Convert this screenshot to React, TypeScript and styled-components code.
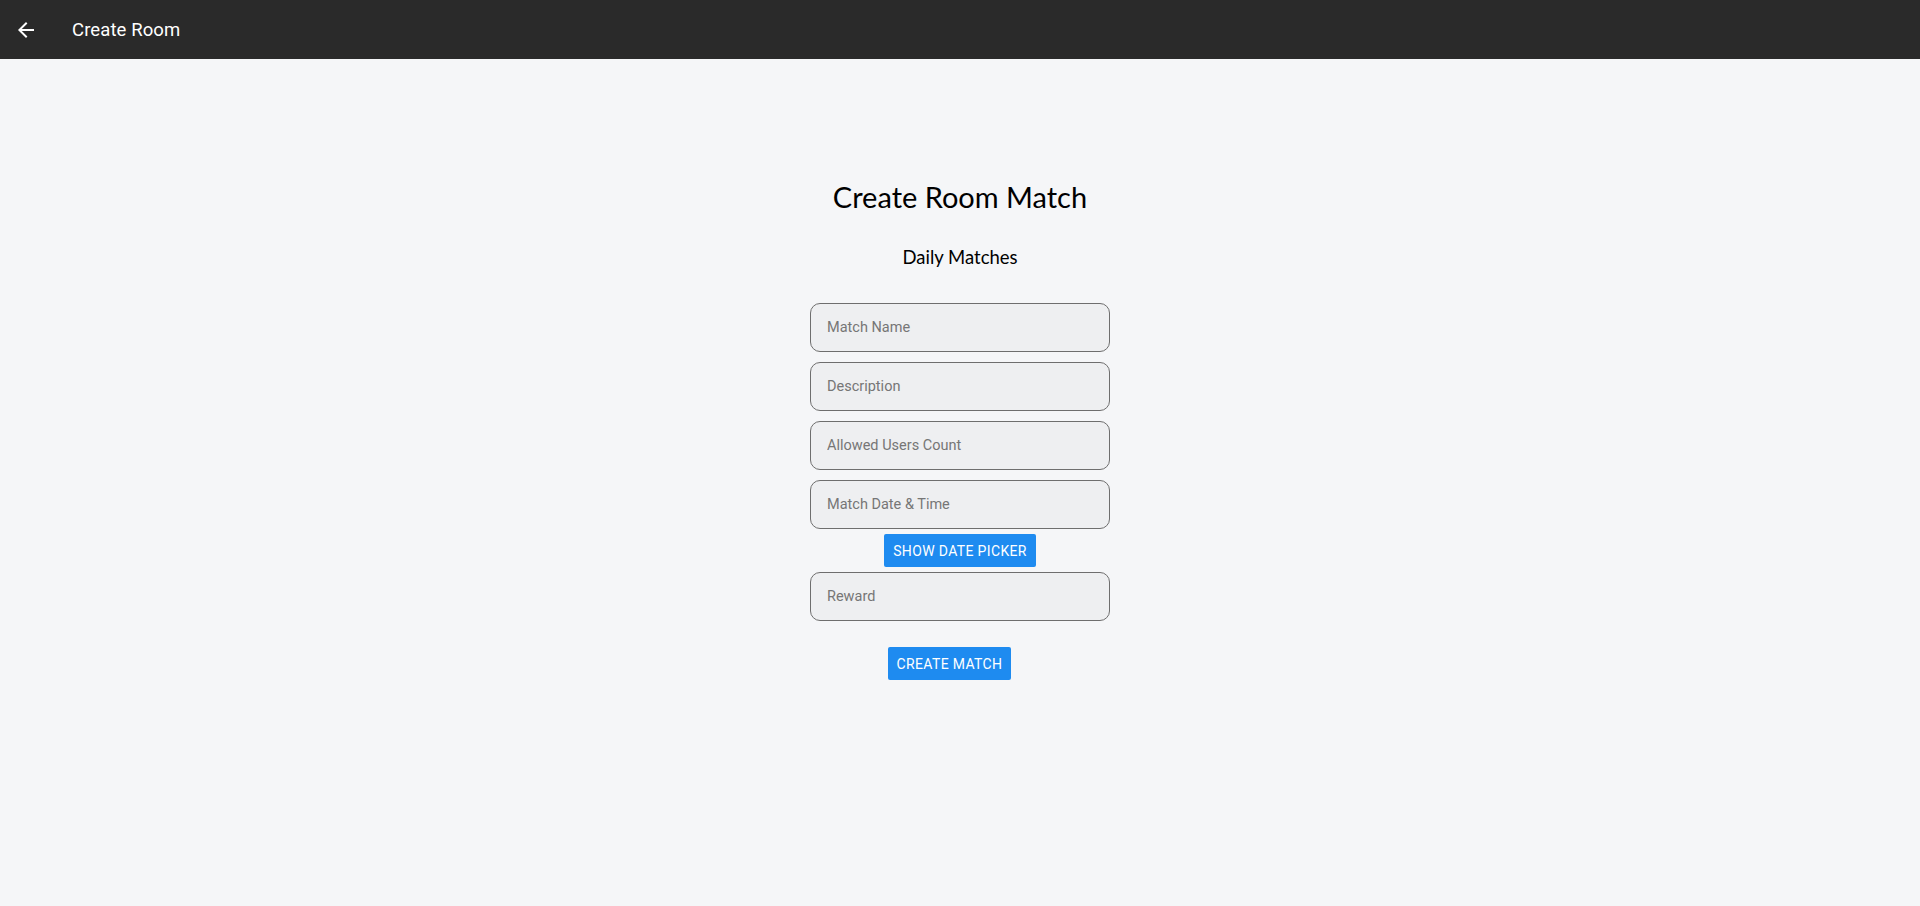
import React from "react";
import styled, { createGlobalStyle } from "styled-components";

const Global = createGlobalStyle`
  html, body { margin: 0; padding: 0; }
  body { background: #f5f6f8; font-family: Roboto, "Liberation Sans", sans-serif; }
  * { box-sizing: border-box; }
`;

const Page = styled.div`
  min-height: 906px;
  background: #f5f6f8;
  display: flex;
  flex-direction: column;
`;

const AppBar = styled.header`
  height: 59px;
  background: #2a2a2a;
  display: flex;
  align-items: center;
  padding: 0 14px;
  color: #fff;
`;

const BackButton = styled.button`
  width: 24px;
  height: 24px;
  padding: 0;
  border: 0;
  background: transparent;
  color: #fff;
  display: flex;
  align-items: center;
  justify-content: center;
  cursor: pointer;
`;

const BarTitle = styled.h1`
  margin: 0 0 0 34px;
  font-family: Roboto, "Liberation Sans", sans-serif;
  font-size: 18.5px;
  font-weight: 400;
  color: #fff;
  letter-spacing: 0.1px;
`;

const Main = styled.main`
  display: flex;
  flex-direction: column;
  align-items: center;
  padding-top: 118px;
`;

const Heading = styled.h2`
  margin: 0;
  font-family: Lato, "Open Sans", sans-serif;
  font-size: 29px;
  font-weight: 400;
  color: #000;
  line-height: 40px;
`;

const SubHeading = styled.h3`
  margin: 27px 0 0;
  font-family: Lato, "Open Sans", sans-serif;
  font-size: 18.5px;
  font-weight: 400;
  color: #000;
  line-height: 26px;
`;

const Form = styled.form`
  margin-top: 33px;
  width: 300px;
  display: flex;
  flex-direction: column;
  align-items: center;
`;

const Field = styled.input<{ $gap?: number }>`
  width: 300px;
  height: 49px;
  margin-top: ${(p) => p.$gap ?? 0}px;
  padding: 0 16px;
  border: 1px solid #6e6e6e;
  border-radius: 10px;
  background: #eeeff1;
  font-family: Roboto, "Liberation Sans", sans-serif;
  font-size: 14.5px;
  color: #222;
  outline: none;
  &::placeholder { color: #767676; }
`;

const Button = styled.button<{ $gap: number; $shift?: number }>`
  margin-top: ${(p) => p.$gap}px;
  margin-right: ${(p) => p.$shift ?? 0}px;
  height: 33px;
  padding: 0 9px;
  border: 0;
  border-radius: 2px;
  background: #1e8bf0;
  color: #fff;
  font-family: Roboto, "Liberation Sans", sans-serif;
  font-size: 14px;
  text-transform: uppercase;
  letter-spacing: 0.35px;
  cursor: pointer;
`;

export default function App() {
  return (
    <Page>
      <Global />
      <AppBar>
        <BackButton aria-label="back">
          <svg width="24" height="24" viewBox="0 0 24 24" fill="currentColor">
            <path d="M20 11H7.83l5.59-5.59L12 4l-8 8 8 8 1.41-1.41L7.83 13H20v-2z" />
          </svg>
        </BackButton>
        <BarTitle>Create Room</BarTitle>
      </AppBar>
      <Main>
        <Heading>Create Room Match</Heading>
        <SubHeading>Daily Matches</SubHeading>
        <Form onSubmit={(e) => e.preventDefault()}>
          <Field placeholder="Match Name" />
          <Field $gap={10} placeholder="Description" />
          <Field $gap={10} placeholder="Allowed Users Count" />
          <Field $gap={10} placeholder="Match Date & Time" />
          <Button type="button" $gap={5}>Show Date Picker</Button>
          <Field $gap={5} placeholder="Reward" />
          <Button type="submit" $gap={26} $shift={21}>Create Match</Button>
        </Form>
      </Main>
    </Page>
  );
}
